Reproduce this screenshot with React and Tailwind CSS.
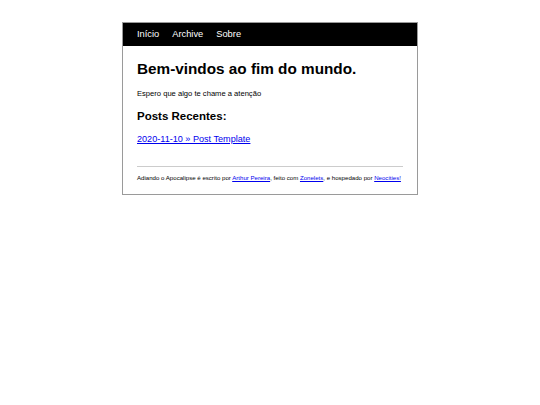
import React from 'react';

const navItems = ['Início', 'Archive', 'Sobre'];

const App = () => {
    return (
        <div className="min-h-[405px] bg-white font-['Liberation_Sans',Arial,sans-serif] text-black">
            <div className="pt-[22px] flex justify-center">
                <div className="w-[296px] border border-[#9a9a9a]">
                    {/* Navbar */}
                    <nav className="h-[23px] bg-black flex items-center gap-[13px] px-[14px]">
                        {navItems.map((item) => (
                            <a key={item} href="#" className="text-white text-[9.3px] leading-none">
                                {item}
                            </a>
                        ))}
                    </nav>

                    {/* Content */}
                    <main className="px-[14px] pt-[13px] pb-[13px]">
                        <h1 className="text-[15.3px] font-bold leading-[20px]">Bem-vindos ao fim do mundo.</h1>
                        <p className="mt-[10px] text-[7.6px] leading-[9px]">Espero que algo te chame a atenção</p>
                        <h2 className="mt-[11px] text-[11.5px] font-bold leading-[14px]">Posts Recentes:</h2>
                        <ul className="mt-[10px] text-[9.1px] leading-[12px]">
                            <li>
                                <a href="#" className="text-[#0000ee] underline">
                                    2020-11-10 » Post Template
                                </a>
                            </li>
                        </ul>
                        <hr className="mt-[21px] border-t border-[#cccccc]" />
                        <footer className="mt-[7px] text-[6.1px] leading-[7px]">
                            Adiando o Apocalipse é escrito por{' '}
                            <a href="#" className="text-[#0000ee] underline">Arthur Pereira</a>, feito com{' '}
                            <a href="#" className="text-[#0000ee] underline">Zonelets</a>, e hospedado por{' '}
                            <a href="#" className="text-[#0000ee] underline">Neocities!</a>
                        </footer>
                    </main>
                </div>
            </div>
        </div>
    );
};

export default App;
